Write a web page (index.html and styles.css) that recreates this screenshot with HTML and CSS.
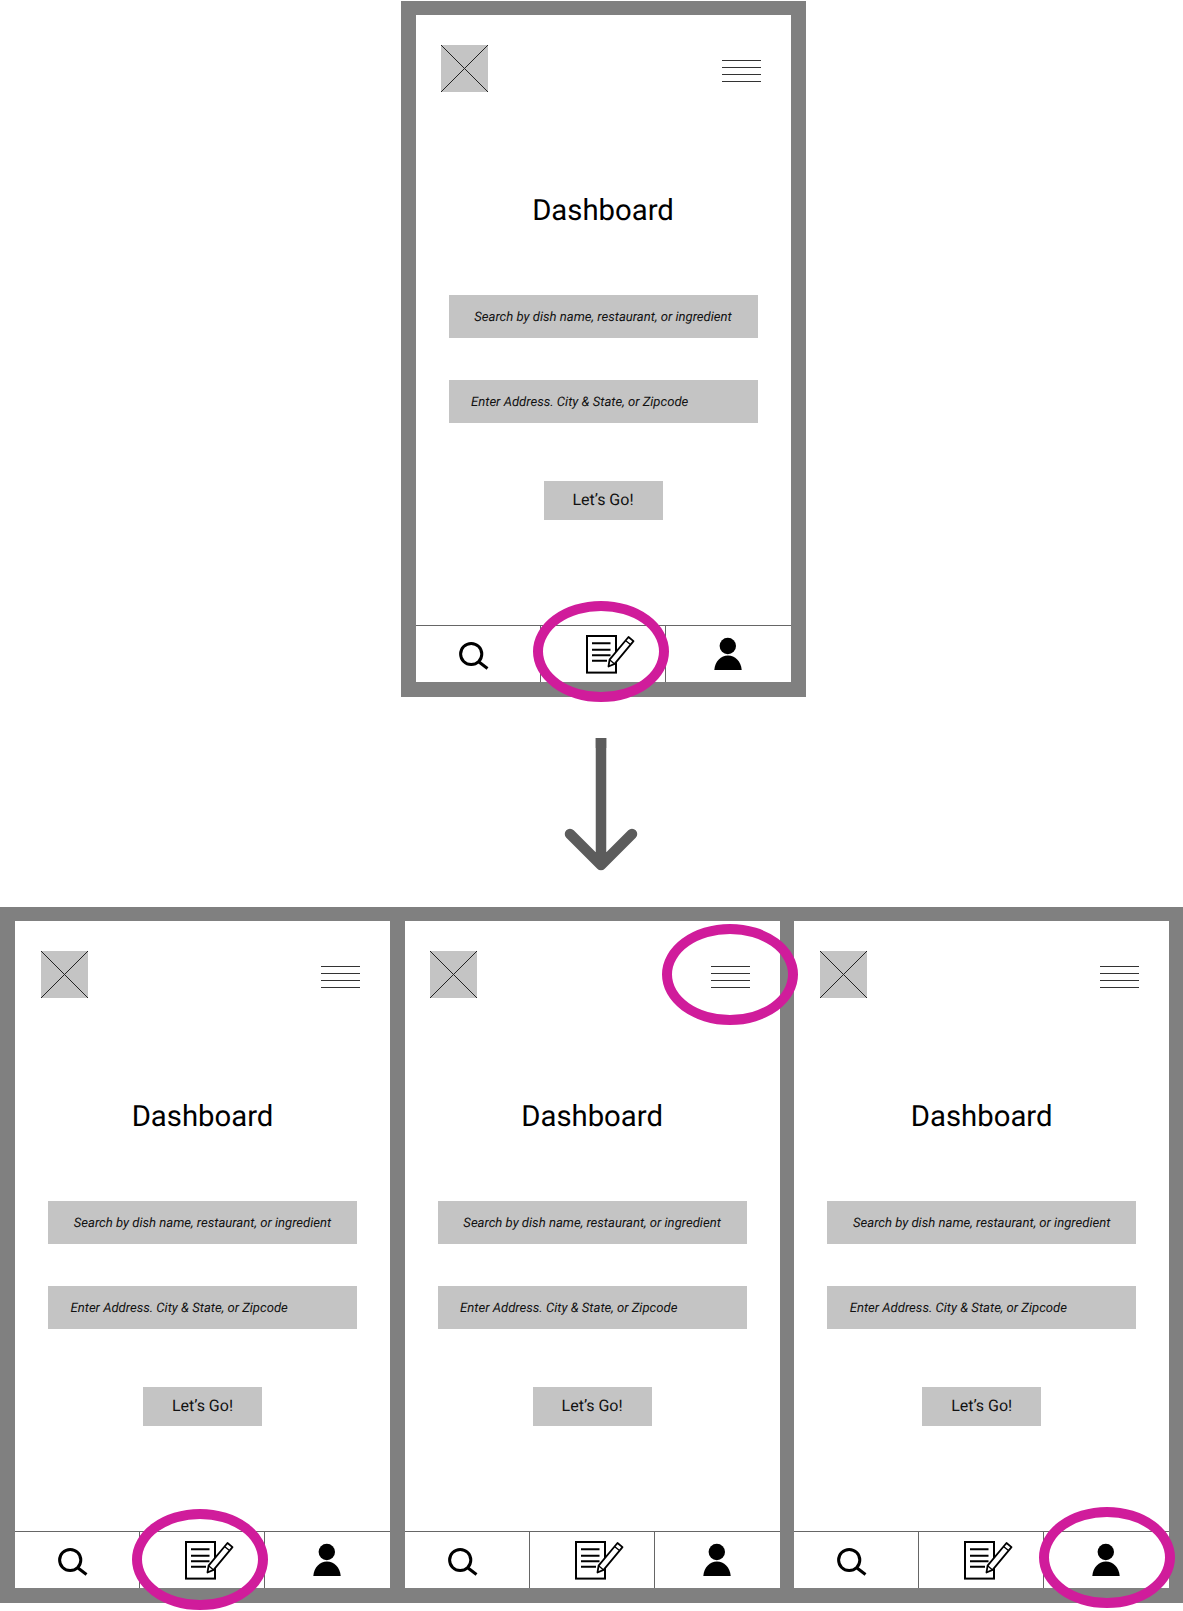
FILE: index.html
```html
<!DOCTYPE html>
<html lang="en">
<head>
<meta charset="utf-8">
<title>Dashboard wireframe flow</title>
<link rel="stylesheet" href="styles.css">
</head>
<body>
<svg class="defs" aria-hidden="true">
  <symbol id="i-logo" viewBox="0 0 47 47">
    <rect width="47" height="47" fill="#c4c4c4"/>
    <path d="M0 0L47 47M47 0L0 47" stroke="#222" stroke-width="1" fill="none"/>
  </symbol>
  <symbol id="i-search" viewBox="0 0 125 56">
    <circle cx="55.2" cy="28" r="10.6" fill="none" stroke="#000" stroke-width="3"/>
    <path d="M63 36L71.5 42.5" stroke="#000" stroke-width="3" fill="none"/>
  </symbol>
  <symbol id="i-write" viewBox="0 0 125 56">
    <rect x="46" y="10" width="29" height="36.6" fill="#fff" stroke="#000" stroke-width="2"/>
    <path d="M51 17.3H69.5M51 23.7H69.5M51 29.3H69.5M51 34.7H66" stroke="#000" stroke-width="2" fill="none"/>
    <path d="M67.5 40.5L68.6 33.7L87.5 11L92.5 15.1L73.6 37.9Z" fill="#fff" stroke="#000" stroke-width="1.8" stroke-linejoin="round"/>
    <path d="M84.5 14.5L89.5 18.6M68.6 33.7L73.6 37.9" stroke="#000" stroke-width="1.3" fill="none"/>
  </symbol>
  <symbol id="i-person" viewBox="0 0 125 56">
    <circle cx="61.8" cy="20" r="8.2" fill="#000"/>
    <path d="M48.3 44C49 35 55 29.5 62 29.5C69 29.5 75 35 75.7 44Z" fill="#000"/>
  </symbol>
</svg>

<section class="frame frame-single">
  <div class="phone">
    <header class="top"><svg class="logo"><use href="#i-logo"/></svg><div class="menu"><i></i><i></i><i></i><i></i></div></header>
    <h1 class="title">Dashboard</h1>
    <div class="field field-center">Search by dish name, restaurant, or ingredient</div>
    <div class="field field-left">Enter Address. City &amp; State, or Zipcode</div>
    <div class="go">Let’s Go!</div>
    <nav class="nav">
      <div class="cell"><svg class="glyph"><use href="#i-search"/></svg></div>
      <div class="cell"><svg class="glyph"><use href="#i-write"/></svg></div>
      <div class="cell"><svg class="glyph"><use href="#i-person"/></svg></div>
    </nav>
    <div class="ring ring-top"></div>
  </div>
</section>

<svg class="arrow" viewBox="0 0 84 134"><path d="M42 0V127M11 96L42 127L73 96" fill="none" stroke="#5c5c5c" stroke-width="10.5" stroke-linecap="round" stroke-linejoin="round"/><path d="M36.75 0H47.25V10H36.75Z" fill="#5c5c5c"/></svg>

<section class="frame frame-triple">
  <div class="phone">
    <header class="top"><svg class="logo"><use href="#i-logo"/></svg><div class="menu"><i></i><i></i><i></i><i></i></div></header>
    <h1 class="title">Dashboard</h1>
    <div class="field field-center">Search by dish name, restaurant, or ingredient</div>
    <div class="field field-left">Enter Address. City &amp; State, or Zipcode</div>
    <div class="go">Let’s Go!</div>
    <nav class="nav">
      <div class="cell"><svg class="glyph"><use href="#i-search"/></svg></div>
      <div class="cell"><svg class="glyph"><use href="#i-write"/></svg></div>
      <div class="cell"><svg class="glyph"><use href="#i-person"/></svg></div>
    </nav>
    <div class="ring ring-write"></div>
  </div>
  <div class="phone">
    <header class="top"><svg class="logo"><use href="#i-logo"/></svg><div class="menu"><i></i><i></i><i></i><i></i></div></header>
    <h1 class="title">Dashboard</h1>
    <div class="field field-center">Search by dish name, restaurant, or ingredient</div>
    <div class="field field-left">Enter Address. City &amp; State, or Zipcode</div>
    <div class="go">Let’s Go!</div>
    <nav class="nav">
      <div class="cell"><svg class="glyph"><use href="#i-search"/></svg></div>
      <div class="cell"><svg class="glyph"><use href="#i-write"/></svg></div>
      <div class="cell"><svg class="glyph"><use href="#i-person"/></svg></div>
    </nav>
    <div class="ring ring-menu"></div>
  </div>
  <div class="phone">
    <header class="top"><svg class="logo"><use href="#i-logo"/></svg><div class="menu"><i></i><i></i><i></i><i></i></div></header>
    <h1 class="title">Dashboard</h1>
    <div class="field field-center">Search by dish name, restaurant, or ingredient</div>
    <div class="field field-left">Enter Address. City &amp; State, or Zipcode</div>
    <div class="go">Let’s Go!</div>
    <nav class="nav">
      <div class="cell"><svg class="glyph"><use href="#i-search"/></svg></div>
      <div class="cell"><svg class="glyph"><use href="#i-write"/></svg></div>
      <div class="cell"><svg class="glyph"><use href="#i-person"/></svg></div>
    </nav>
    <div class="ring ring-profile"></div>
  </div>
</section>
</body>
</html>
```
FILE: styles.css
```css
* { box-sizing: border-box; }
html, body { margin: 0; padding: 0; background: #fff; }
body {
  width: 1183px;
  height: 1611px;
  overflow: hidden;
  padding-top: 1px;
  font-family: Roboto, "Liberation Sans", sans-serif;
  text-rendering: geometricPrecision;
  color: #000;
}
.defs { width: 0; height: 0; position: absolute; }

.frame { background: #808080; }
.frame-single {
  width: 405px;
  margin-left: 400.5px;
  padding: 14px 15px 15px;
}
.frame-triple {
  margin-top: 35px;
  display: grid;
  grid-template-columns: repeat(3, 375px);
  column-gap: 14.6px;
  padding: 14px 13px 15px 15px;
}

.phone {
  position: relative;
  display: flex;
  flex-direction: column;
  align-items: center;
  width: 375px;
  height: 667px;
  background: #fff;
}
.top {
  align-self: stretch;
  display: flex;
  justify-content: space-between;
  align-items: flex-start;
  padding: 30px 30px 0 25.5px;
}
.logo { display: block; width: 47px; height: 47px; }
.menu {
  display: flex;
  flex-direction: column;
  gap: 6.2px;
  width: 39px;
  margin-top: 14.5px;
}
.menu i { display: block; height: 1px; background: #333; }

.title {
  margin: 100.5px 0 0;
  font-size: 29.3px;
  line-height: 36px;
  font-weight: 400;
}
.field {
  display: flex;
  align-items: center;
  width: 309px;
  height: 43px;
  padding-top: 1px;
  background: #c4c4c4;
  font-size: 13.1px;
  font-style: italic;
  color: #111;
}
.field-center { justify-content: center; margin-top: 66.5px; }
.field-left { padding-left: 22.5px; margin-top: 42px; }
.go {
  display: flex;
  align-items: center;
  justify-content: center;
  width: 119px;
  height: 39.5px;
  margin-top: 57.5px;
  padding-bottom: 1px;
  background: #c4c4c4;
  font-size: 16px;
  color: #111;
}

.nav {
  align-self: stretch;
  display: grid;
  grid-template-columns: repeat(3, 125px);
  height: 57px;
  margin-top: auto;
  border-top: 1px solid #666;
}
.cell { border-right: 1px solid #666; }
.cell:last-child { border-right: 0; }
.glyph { display: block; width: 125px; height: 56px; }

.ring {
  position: absolute;
  z-index: 1;
  width: 136px;
  height: 101px;
  border: 10px solid #d01c9b;
  border-radius: 50%;
}
.ring-top { left: 117.5px; top: 586px; }
.ring-write { left: 117px; top: 588px; }
.ring-menu { left: 257.5px; top: 3px; }
.ring-profile { left: 245px; top: 586px; }

.arrow {
  display: block;
  width: 84px;
  height: 134px;
  margin: 41px 0 0 558.5px;
}
```
